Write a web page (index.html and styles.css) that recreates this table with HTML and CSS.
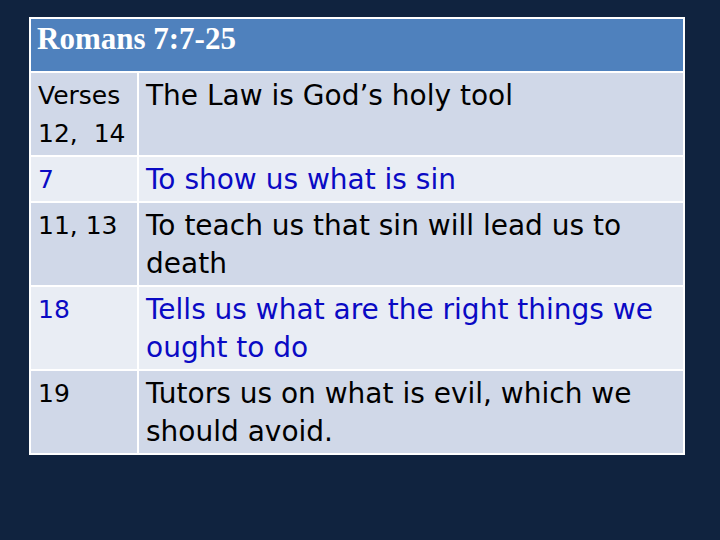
FILE: index.html
```html
<!DOCTYPE html>
<html lang="en">

<head>
    <meta charset="UTF-8">
    <title>Romans 7:7-25</title>
    <link rel="stylesheet" href="styles.css">
</head>

<body>
    <div class="slide">
        <table class="verses">
            <thead>
                <tr>
                    <th colspan="2">Romans 7:7-25</th>
                </tr>
            </thead>
            <tbody>
                <tr class="odd">
                    <td class="ref">Verses 12,&nbsp; 14</td>
                    <td>The Law is God’s holy tool</td>
                </tr>
                <tr class="even blue">
                    <td class="ref">7</td>
                    <td>To show us what is sin</td>
                </tr>
                <tr class="odd">
                    <td class="ref">11, 13</td>
                    <td>To teach us that sin will lead us to death</td>
                </tr>
                <tr class="even blue">
                    <td class="ref">18</td>
                    <td>Tells us what are the right things we ought to do</td>
                </tr>
                <tr class="odd">
                    <td class="ref">19</td>
                    <td>Tutors us on what is evil, which we should avoid.</td>
                </tr>
            </tbody>
        </table>
    </div>
</body>

</html>
```

FILE: styles.css
```css
html,
body {
    margin: 0;
    height: 100%;
}

body {
    background-color: #10233f;
}

.slide {
    padding: 17px 0 0 29px;
}

.verses {
    width: 656px;
    border-collapse: collapse;
    border: 2px solid #ffffff;
    font-family: "DejaVu Sans", sans-serif;
}

th,
td {
    border: 2px solid #ffffff;
    text-align: left;
    vertical-align: top;
}

th {
    height: 50px;
    padding: 2px 6px 0;
    background-color: #4f81bd;
    color: #ffffff;
    font-family: "Liberation Serif", serif;
    font-size: 31px;
    font-weight: bold;
    vertical-align: top;
}

td {
    padding: 4px 7px 2px 7px;
    font-size: 28px;
    line-height: 38px;
    color: #000000;
}

td.ref {
    width: 92px;
    font-size: 25px;
}

.odd td {
    background-color: #d0d8e8;
}

.even td {
    background-color: #e9edf4;
}

.blue td {
    color: #0a0ac4;
}
```
